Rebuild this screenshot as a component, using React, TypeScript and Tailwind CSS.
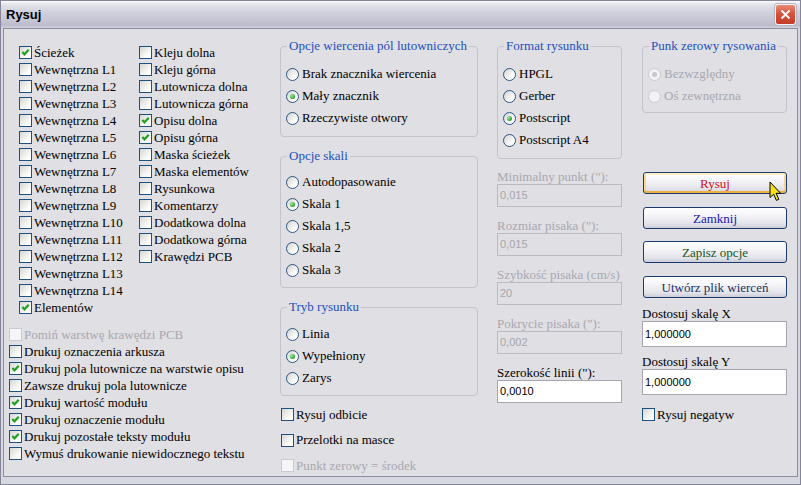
import clsx from 'clsx';
import type { ReactNode } from 'react';

type Opt = [label: string, checked: boolean, disabled?: boolean];

const leftLayers: Opt[] = [
    ['Ścieżek', true],
    ['Wewnętrzna L1', false],
    ['Wewnętrzna L2', false],
    ['Wewnętrzna L3', false],
    ['Wewnętrzna L4', false],
    ['Wewnętrzna L5', false],
    ['Wewnętrzna L6', false],
    ['Wewnętrzna L7', false],
    ['Wewnętrzna L8', false],
    ['Wewnętrzna L9', false],
    ['Wewnętrzna L10', false],
    ['Wewnętrzna L11', false],
    ['Wewnętrzna L12', false],
    ['Wewnętrzna L13', false],
    ['Wewnętrzna L14', false],
    ['Elementów', true]
];

const rightLayers: Opt[] = [
    ['Kleju dolna', false],
    ['Kleju górna', false],
    ['Lutownicza dolna', false],
    ['Lutownicza górna', false],
    ['Opisu dolna', true],
    ['Opisu górna', true],
    ['Maska ścieżek', false],
    ['Maska elementów', false],
    ['Rysunkowa', false],
    ['Komentarzy', false],
    ['Dodatkowa dolna', false],
    ['Dodatkowa górna', false],
    ['Krawędzi PCB', false]
];

const printOptions: Opt[] = [
    ['Pomiń warstwę krawędzi PCB', false, true],
    ['Drukuj oznaczenia arkusza', false],
    ['Drukuj pola lutownicze na warstwie opisu', true],
    ['Zawsze drukuj pola lutownicze', false],
    ['Drukuj wartość modułu', true],
    ['Drukuj oznaczenie modułu', true],
    ['Drukuj pozostałe teksty modułu', true],
    ['Wymuś drukowanie niewidocznego tekstu', false]
];

function CheckBox({ checked, disabled }: { checked?: boolean; disabled?: boolean }) {
    return (
        <span
            className={clsx(
                'flex h-[13px] w-[13px] shrink-0 items-center justify-center border',
                disabled
                    ? 'border-[#cacad0] bg-[#f6f6f8]'
                    : 'border-[#1c5180] bg-[linear-gradient(135deg,#d6d6d2,#ffffff_80%)]'
            )}
        >
            {checked && (
                <svg width="11" height="11" viewBox="0 0 11 11">
                    <polyline
                        points="2.3,5 4.5,7.3 8.7,2.8"
                        fill="none"
                        stroke="#21a121"
                        strokeWidth="2.2"
                    />
                </svg>
            )}
        </span>
    );
}

function CheckRow({ label, checked, disabled, className }: { label: string; checked?: boolean; disabled?: boolean; className?: string }) {
    return (
        <div className={clsx('flex h-[17px] items-center gap-[2px] whitespace-nowrap', className)}>
            <CheckBox checked={checked} disabled={disabled} />
            <span className={disabled ? 'text-[#a8a8b0]' : 'text-black'}>{label}</span>
        </div>
    );
}

function Radio({ checked, disabled }: { checked?: boolean; disabled?: boolean }) {
    return (
        <span
            className={clsx(
                'flex h-[13px] w-[13px] shrink-0 items-center justify-center rounded-full border',
                disabled
                    ? 'border-[#cbcbd1] bg-[#f2f2f4]'
                    : 'border-[#2b5783] bg-[linear-gradient(135deg,#d3d3d0,#ffffff_75%)]'
            )}
        >
            {checked && (
                <span
                    className={clsx(
                        'h-[5px] w-[5px] rounded-full',
                        disabled ? 'bg-[#c6c6cc]' : 'bg-[radial-gradient(circle_at_35%_35%,#a4e4a4,#2aa52a_70%)]'
                    )}
                />
            )}
        </span>
    );
}

function RadioRow({ label, checked, disabled }: { label: string; checked?: boolean; disabled?: boolean }) {
    return (
        <div className="flex h-[22px] items-center gap-[3px] whitespace-nowrap">
            <Radio checked={checked} disabled={disabled} />
            <span className={disabled ? 'text-[#a8a8b0]' : 'text-black'}>{label}</span>
        </div>
    );
}

function Group({ title, className, children }: { title: string; className?: string; children: ReactNode }) {
    return (
        <fieldset className={clsx('rounded-[4px] border border-[#c3c3cb] px-[5px]', className)}>
            <legend className="ml-[1px] px-[2px] leading-[14px] whitespace-nowrap text-[#1d4fbe]">{title}</legend>
            {children}
        </fieldset>
    );
}

function Field({ value, disabled, className }: { value: string; disabled?: boolean; className?: string }) {
    return (
        <div
            className={clsx(
                'flex items-center border pl-[2px] font-[Liberation_Sans,Arial,sans-serif] text-[11px]',
                disabled ? 'border-[#babac2] text-[#a6a6ae]' : 'border-[#a6a6b0] bg-white text-black',
                className
            )}
        >
            {value}
        </div>
    );
}

function LabeledField({ label, value, disabled, className }: { label: string; value: string; disabled?: boolean; className?: string }) {
    return (
        <div className={className}>
            <div className={clsx('h-[15px] leading-[15px] whitespace-nowrap', disabled ? 'text-[#a8a8b0]' : 'text-black')}>
                {label}
            </div>
            <Field value={value} disabled={disabled} className="h-[23px]" />
        </div>
    );
}

function XpButton({ children, className, hot }: { children: ReactNode; className?: string; hot?: boolean }) {
    return (
        <button
            className={clsx(
                'ml-[1px] flex h-[22px] w-[144px] items-center justify-center rounded-[3px] border border-[#1b3b6e] bg-[linear-gradient(to_bottom,#ffffff,#f6f6f9_35%,#e2e2ea_80%,#cdcdda)] text-[13px] leading-none',
                hot && 'shadow-[inset_0_2px_0_#fff0c8,inset_0_-2px_0_#f1b044,inset_2px_0_0_#f8d690,inset_-2px_0_0_#f8d690]',
                className
            )}
        >
            {children}
        </button>
    );
}

export default function App() {
    return (
        <div className="relative flex h-[485px] w-[801px] flex-col overflow-hidden border border-[#85859a] bg-[#d7d7e1] font-[Liberation_Serif,Times_New_Roman,serif] text-[13px] text-black">
            {/* caption bar */}
            <div className="flex h-[27px] shrink-0 items-center justify-between bg-[linear-gradient(to_bottom,#fdfdfe_0%,#e4e4ec_12%,#d2d2de_40%,#c4c4d3_75%,#bbbbcc_90%,#d3d3df_100%)] pl-[5px] pr-[4px]">
                <span className="font-[Liberation_Sans,Arial,sans-serif] text-[13px] font-bold text-black">Rysuj</span>
                <span className="flex h-[21px] w-[21px] items-center justify-center rounded-[3px] border border-[#f4f4f6] bg-[linear-gradient(to_bottom,#e98a76,#d5553e_45%,#c23c28)] shadow-[0_0_0_1px_#b5b5c4]">
                    <svg width="11" height="11" viewBox="0 0 11 11">
                        <path d="M1.5 1.5 L9.5 9.5 M9.5 1.5 L1.5 9.5" stroke="#ffffff" strokeWidth="1.8" />
                    </svg>
                </span>
            </div>

            {/* client area */}
            <div className="mx-[2px] mb-[7px] flex flex-1 border border-[#8e8ea2] bg-[#e0dfe3]">
                {/* layers and print flags */}
                <div className="w-[276px] pt-[15px]">
                    <div className="flex">
                        <div className="w-[135px] pl-[15px]">
                            {leftLayers.map(([label, checked]) => (
                                <CheckRow key={label} label={label} checked={checked} />
                            ))}
                        </div>
                        <div>
                            {rightLayers.map(([label, checked]) => (
                                <CheckRow key={label} label={label} checked={checked} />
                            ))}
                        </div>
                    </div>
                    <div className="mt-[10px] pl-[5px]">
                        {printOptions.map(([label, checked, disabled]) => (
                            <CheckRow key={label} label={label} checked={checked} disabled={disabled} />
                        ))}
                    </div>
                </div>

                {/* drill, scale and mode */}
                <div className="w-[198px] pt-[10px]">
                    <Group title="Opcje wiercenia pól lutowniczych" className="pt-[10px] pb-[7px]">
                        <RadioRow label="Brak znacznika wiercenia" />
                        <RadioRow label="Mały znacznik" checked />
                        <RadioRow label="Rzeczywiste otwory" />
                    </Group>
                    <Group title="Opcje skali" className="mt-[12px] pt-[8px] pb-[6px]">
                        <RadioRow label="Autodopasowanie" />
                        <RadioRow label="Skala 1" checked />
                        <RadioRow label="Skala 1,5" />
                        <RadioRow label="Skala 2" />
                        <RadioRow label="Skala 3" />
                    </Group>
                    <Group title="Tryb rysunku" className="mt-[12px] pt-[9px] pb-[6px]">
                        <RadioRow label="Linia" />
                        <RadioRow label="Wypełniony" checked />
                        <RadioRow label="Zarys" />
                    </Group>
                    <div className="mt-[10px] flex flex-col gap-[8.5px] pl-[1px]">
                        <CheckRow label="Rysuj odbicie" />
                        <CheckRow label="Przelotki na masce" />
                        <CheckRow label="Punkt zerowy = środek" disabled />
                    </div>
                </div>

                {/* format and pen settings */}
                <div className="ml-[19px] w-[125px] pt-[10px]">
                    <Group title="Format rysunku" className="pt-[10px] pb-[7px]">
                        <RadioRow label="HPGL" />
                        <RadioRow label="Gerber" />
                        <RadioRow label="Postscript" checked />
                        <RadioRow label="Postscript A4" />
                    </Group>
                    <LabeledField className="mt-[10px]" label={'Minimalny punkt ("):'} value="0,015" disabled />
                    <LabeledField className="mt-[11px]" label={'Rozmiar pisaka ("):'} value="0,015" disabled />
                    <LabeledField className="mt-[11px]" label="Szybkość pisaka (cm/s)" value="20" disabled />
                    <LabeledField className="mt-[11px]" label={'Pokrycie pisaka ("):'} value="0,002" disabled />
                    <LabeledField className="mt-[11px]" label={'Szerokość linii ("):'} value="0,0010" />
                </div>

                {/* origin, actions and scale adjust */}
                <div className="ml-[20px] w-[145px] pt-[10px]">
                    <Group title="Punk zerowy rysowania" className="pt-[10px] pb-[5px]">
                        <RadioRow label="Bezwzględny" checked disabled />
                        <RadioRow label="Oś zewnętrzna" disabled />
                    </Group>
                    <XpButton hot className="mt-[59px] text-[#d0101c]">Rysuj</XpButton>
                    <XpButton className="mt-[13px] text-[#1616b4]">Zamknij</XpButton>
                    <XpButton className="mt-[12px] text-[#17561c]">Zapisz opcje</XpButton>
                    <XpButton className="mt-[13px] text-[#1b3463]">Utwórz plik wierceń</XpButton>
                    <div className="mt-[8px] h-[15px] leading-[15px]">Dostosuj skalę X</div>
                    <Field value="1,000000" className="h-[26px]" />
                    <div className="mt-[7px] h-[15px] leading-[15px]">Dostosuj skalę Y</div>
                    <Field value="1,000000" className="h-[26px]" />
                    <CheckRow label="Rysuj negatyw" className="mt-[11px]" />
                </div>
            </div>

            {/* mouse pointer resting on the plot button */}
            <svg
                className="pointer-events-none absolute left-[768px] top-[180px]"
                width="13"
                height="21"
                viewBox="0 0 13 21"
            >
                <path
                    d="M1 1 L1 16.5 L4.6 13.2 L7.4 19.4 L9.8 18.3 L7.1 12.3 L11.6 12.3 Z"
                    fill="#f3e21a"
                    stroke="#000000"
                    strokeWidth="1"
                />
            </svg>
        </div>
    );
}
